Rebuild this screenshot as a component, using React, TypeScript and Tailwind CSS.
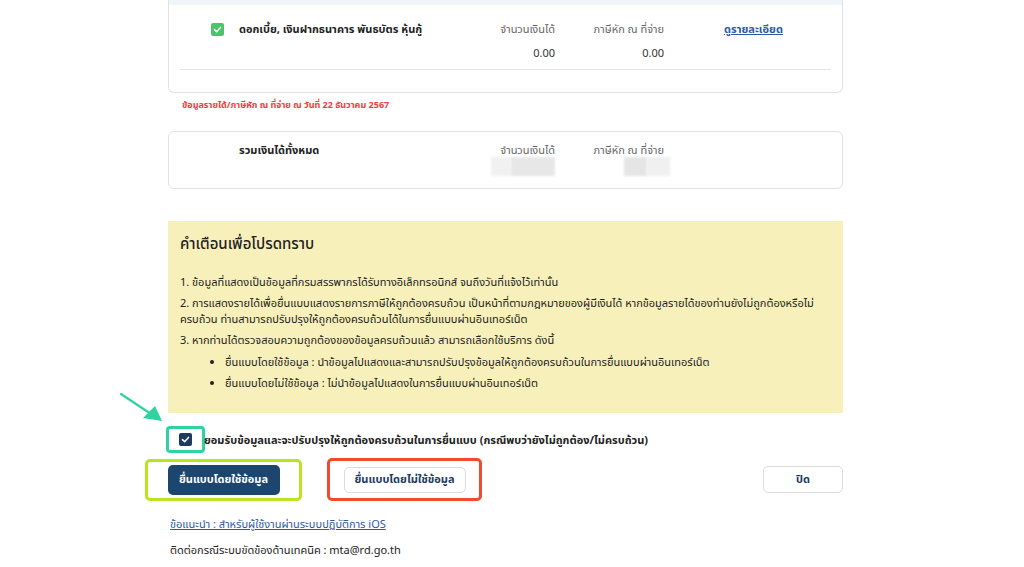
const font = { fontFamily: '"Noto Sans", "Noto Sans Thai", sans-serif' };

function GreenCheck() {
  return (
    <span className="flex h-[13px] w-[13px] items-center justify-center rounded-[2px] bg-[#4cc56a]">
      <svg viewBox="0 0 12 12" className="h-[9px] w-[9px]">
        <path d="M2 6.2 L4.8 9 L10 3.2" fill="none" stroke="white" strokeWidth="2" strokeLinecap="round" strokeLinejoin="round" />
      </svg>
    </span>
  );
}

function NavyCheck() {
  return (
    <span className="flex h-[13px] w-[13px] items-center justify-center rounded-[2px] bg-[#1c3a5e]">
      <svg viewBox="0 0 12 12" className="h-[9px] w-[9px]">
        <path d="M2 6.2 L4.8 9 L10 3.2" fill="none" stroke="white" strokeWidth="2" strokeLinecap="round" strokeLinejoin="round" />
      </svg>
    </span>
  );
}

export default function App() {
  return (
    <div className="relative h-[567px] w-[1024px] overflow-hidden bg-white text-[#222]" style={font}>
      <div className="ml-[168px] w-[675px]">
        {/* income row card */}
        <div className="h-[93px] rounded-b-md border border-t-0 border-[#e2e2e2]">
          <div className="h-[5px] bg-[#eef6f9]" />
          <div className="flex pt-[17px] pl-[42px]">
            <div className="pt-[1px]">
              <GreenCheck />
            </div>
            <div className="ml-[15px] w-[241px] text-[11px] font-bold leading-[14px]">
              ดอกเบี้ย, เงินฝากธนาคาร พันธบัตร หุ้นกู้
            </div>
            <div className="w-[75px] text-right text-[11px] leading-[14px] text-[#666]">
              <div>จำนวนเงินได้</div>
              <div className="mt-[10px] text-[#333]">0.00</div>
            </div>
            <div className="w-[109px] text-right text-[11px] leading-[14px] text-[#666]">
              <div>ภาษีหัก ณ ที่จ่าย</div>
              <div className="mt-[10px] text-[#333]">0.00</div>
            </div>
            <a href="#" className="ml-[60px] text-[11px] font-bold leading-[14px] text-[#2b5aa6] underline">
              ดูรายละเอียด
            </a>
          </div>
          <div className="mx-[11px] mt-[9px] h-px bg-[#e4e4e4]" />
        </div>

        <div className="ml-[14px] mt-[6px] text-[9px] font-bold leading-[12px] text-[#f0403c]">
          ข้อมูลรายได้/ภาษีหัก ณ ที่จ่าย ณ วันที่ 22 ธันวาคม 2567
        </div>

        {/* total card */}
        <div className="mt-[20px] flex h-[58px] rounded-md border border-[#e2e2e2] pt-[11px] pl-[70px]">
          <div className="w-[241px] text-[11px] font-bold leading-[14px]">รวมเงินได้ทั้งหมด</div>
          <div className="w-[75px] text-right text-[11px] leading-[14px] text-[#666]">
            <div>จำนวนเงินได้</div>
            <div className="ml-[2px] mt-[0px] flex h-[19px] justify-end">
              <span className="h-full w-[20px] bg-[#f1f1f1] blur-[1px]" />
              <span className="h-full w-[44px] bg-[#e7e7e7] blur-[1px]" />
            </div>
          </div>
          <div className="w-[109px] text-right text-[11px] leading-[14px] text-[#666]">
            <div>ภาษีหัก ณ ที่จ่าย</div>
            <div className="mt-[0px] flex h-[19px] justify-end">
              <span className="h-full w-[23px] bg-[#e5e5e5] blur-[1px]" />
              <span className="-mr-[6px] h-full w-[23px] bg-[#f0f0f0] blur-[1px]" />
            </div>
          </div>
        </div>

        {/* warning box */}
        <div className="mt-[32px] h-[192px] bg-[#f8f0bb] px-[12px] pt-[12px] text-[#222]">
          <div className="text-[15px] font-medium leading-[20px]">คำเตือนเพื่อโปรดทราบ</div>
          <div className="mt-[21px] text-[11px] leading-[16px]">
            <div>1. ข้อมูลที่แสดงเป็นข้อมูลที่กรมสรรพากรได้รับทางอิเล็กทรอนิกส์ จนถึงวันที่แจ้งไว้เท่านั้น</div>
            <div className="mt-[5px]">
              2. การแสดงรายได้เพื่อยื่นแบบแสดงรายการภาษีให้ถูกต้องครบถ้วน เป็นหน้าที่ตามกฎหมายของผู้มีเงินได้ หากข้อมูลรายได้ของท่านยังไม่ถูกต้องหรือไม่ครบถ้วน ท่านสามารถปรับปรุงให้ถูกต้องครบถ้วนได้ในการยื่นแบบผ่านอินเทอร์เน็ต
            </div>
            <div className="mt-[5px]">3. หากท่านได้ตรวจสอบความถูกต้องของข้อมูลครบถ้วนแล้ว สามารถเลือกใช้บริการ ดังนี้</div>
            <ul className="ml-[35px] mt-[6px] list-disc pl-[10px]">
              <li>ยื่นแบบโดยใช้ข้อมูล : นำข้อมูลไปแสดงและสามารถปรับปรุงข้อมูลให้ถูกต้องครบถ้วนในการยื่นแบบผ่านอินเทอร์เน็ต</li>
              <li className="mt-[5px]">ยื่นแบบโดยไม่ใช้ข้อมูล : ไม่นำข้อมูลไปแสดงในการยื่นแบบผ่านอินเทอร์เน็ต</li>
            </ul>
          </div>
        </div>

        {/* consent */}
        <div className="ml-[-2px] mt-[13px] flex items-center">
          <div className="flex h-[27px] w-[39px] items-center justify-center rounded-[4px] border-[3px] border-[#2fd3a1]">
            <NavyCheck />
          </div>
          <div className="ml-[-1px] text-[11px] font-bold leading-[14px]">
            ยอมรับข้อมูลและจะปรับปรุงให้ถูกต้องครบถ้วนในการยื่นแบบ (กรณีพบว่ายังไม่ถูกต้อง/ไม่ครบถ้วน)
          </div>
        </div>

        {/* buttons */}
        <div className="mt-[5px] flex items-center">
          <div className="ml-[-23px] flex h-[42px] w-[157px] items-center justify-center rounded-[5px] border-[3px] border-[#b7e61e]">
            <button className="h-[30px] w-[112px] rounded-[5px] bg-[#1c4670] text-[11px] font-bold text-white">
              ยื่นแบบโดยใช้ข้อมูล
            </button>
          </div>
          <div className="ml-[25px] flex h-[43px] w-[155px] items-center justify-center rounded-[5px] border-[3px] border-[#f3492f]">
            <button className="h-[26px] w-[122px] rounded-[5px] border border-[#dcdcdc] bg-white text-[11px] font-bold text-[#1c3a5e]">
              ยื่นแบบโดยไม่ใช้ข้อมูล
            </button>
          </div>
          <button className="ml-auto h-[27px] w-[80px] rounded-[5px] border border-[#dcdcdc] bg-white text-[11px] font-bold text-[#1c3a5e]">
            ปิด
          </button>
        </div>

        <div className="ml-[2px] mt-[16px] text-[11px] leading-[14px]">
          <a href="#" className="text-[#2b5aa6] underline">ข้อแนะนำ : สำหรับผู้ใช้งานผ่านระบบปฏิบัติการ iOS</a>
          <div className="mt-[12px] text-[#222]">ติดต่อกรณีระบบขัดข้องด้านเทคนิค : mta@rd.go.th</div>
        </div>
      </div>

      {/* annotation arrow */}
      <svg className="absolute left-[116px] top-[388px]" width="52" height="40" viewBox="0 0 52 40">
        <line x1="5" y1="6" x2="38" y2="28" stroke="#2fd39f" strokeWidth="2.2" strokeLinecap="round" />
        <path d="M46 33 L27 30 L39 18 Z" fill="#2fd39f" />
      </svg>
    </div>
  );
}
